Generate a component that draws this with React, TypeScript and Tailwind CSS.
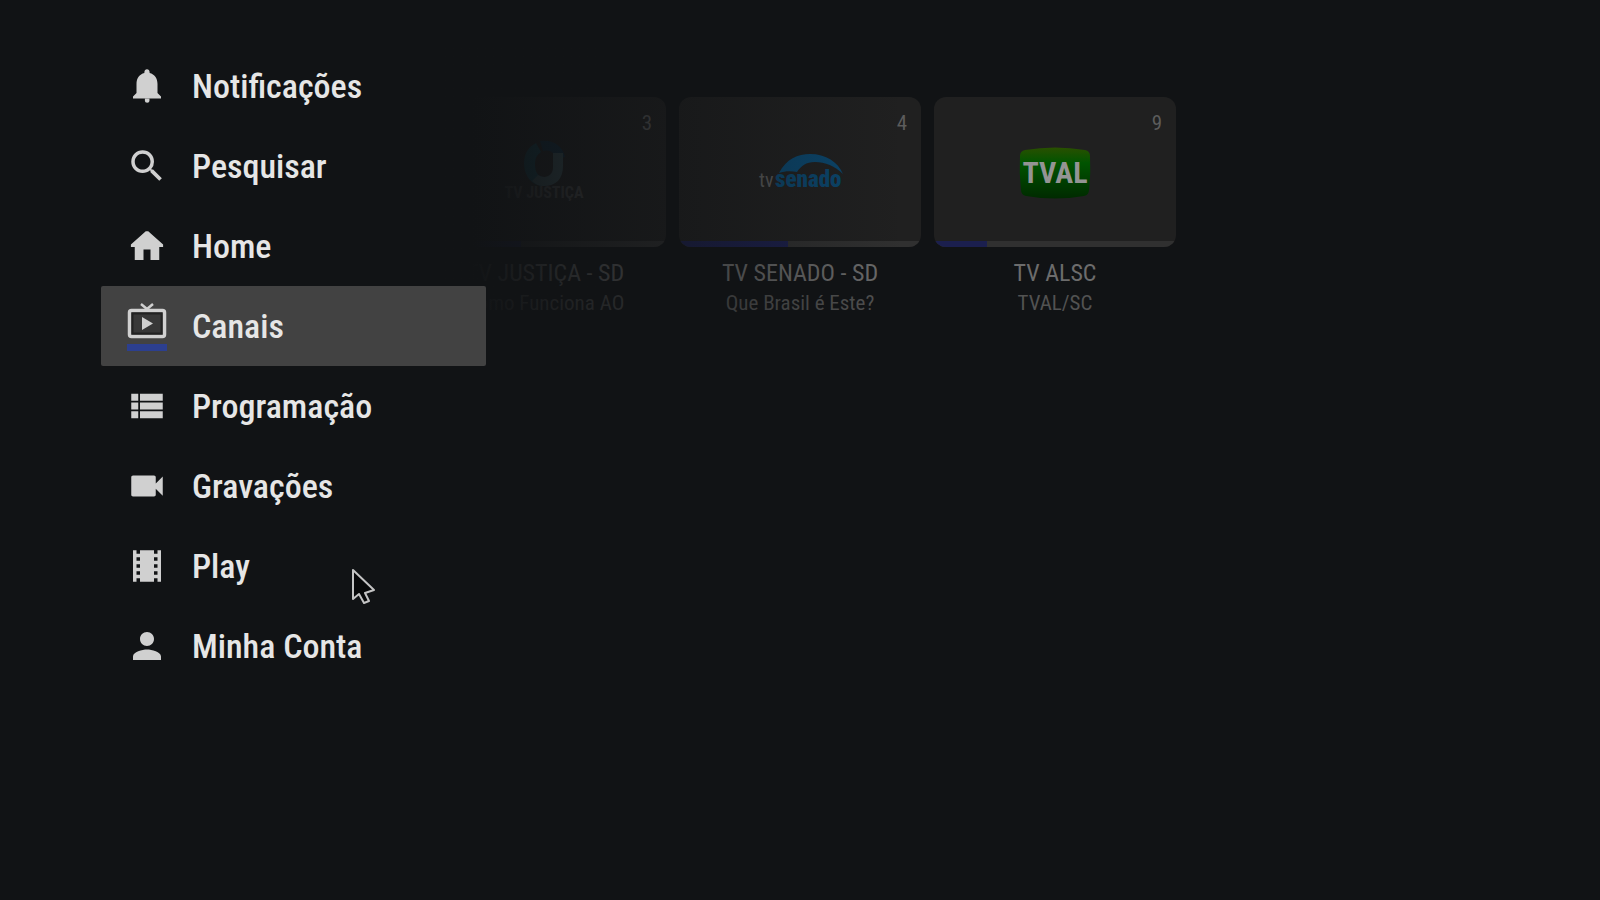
import React from "react";
import type { IconType } from "react-icons";
import {
  MdPerson,
  MdSearch,
  MdTheaters,
  MdVideocam,
  MdViewList,
} from "react-icons/md";

type IconProps = { className?: string };

function BellIcon({ className }: IconProps) {
  return (
    <svg viewBox="0 0 24 24" fill="currentColor" className={className} aria-hidden="true">
      <path d="M10.8 19h2.6v1.6q0 1-1.3 1t-1.3-1zM18 16v-5.2c0-3.4-1.7-5.6-4.5-6.3v-.4C13.500 3 12.800 2.400 12 2.400s-1.500.6-1.500 1.700v.4C7.700 5.200 6 7.400 6 10.800V16l-2 2v1.200h16V18z" />
    </svg>
  );
}

function HomeIcon({ className }: IconProps) {
  return (
    <svg viewBox="0 0 24 24" fill="currentColor" className={className} aria-hidden="true">
      <path d="M10 20v-6h4v6h5v-7.500h2.200v-1.400L12.700 3.600h-1.400L2.800 11.100v1.400H5V20z" />
    </svg>
  );
}

function TvIcon({ className }: IconProps) {
  return (
    <svg viewBox="0 0 42 42" className={className} aria-hidden="true">
      <path d="M15 2l6 5 6-5" fill="none" stroke="currentColor" strokeWidth="2.500" />
      <rect x="3.500" y="8.500" width="35" height="26" rx="2" fill="#383838" stroke="currentColor" strokeWidth="3.500" />
      <rect x="6.500" y="11.500" width="29" height="20" fill="none" stroke="#222" strokeWidth="2" />
      <path d="M16 15v13l11-6.500z" fill="currentColor" />
    </svg>
  );
}

type NavItem = {
  label: string;
  icon: IconType | typeof HomeIcon;
  active?: boolean;
};

const navItems: NavItem[] = [
  { label: "Notificações", icon: BellIcon },
  { label: "Pesquisar", icon: MdSearch },
  { label: "Home", icon: HomeIcon },
  { label: "Canais", icon: TvIcon, active: true },
  { label: "Programação", icon: MdViewList },
  { label: "Gravações", icon: MdVideocam },
  { label: "Play", icon: MdTheaters },
  { label: "Minha Conta", icon: MdPerson },
];

function JusticaLogo() {
  return (
    <svg viewBox="0 0 90 58" className="h-[58px] w-[90px] overflow-visible" aria-hidden="true">
      <path d="M36-2C28 2 24 9 24 18c0 13 8 23 20 23v-9c-6 0-9-5-9-13 0-6 2-9 6-12z" fill="#0c4a5a" />
      <path d="M40-4c14-2 23 6 25 16l-9 2c-1-6-6-10-13-8z" fill="#0a2e46" />
      <path d="M53 8h10v13c0 13-7 20-19 20-5 0-9-2-12-5l6-6c6 4 15 2 15-8z" fill="#3f5c62" />
      <text x="44" y="53" textAnchor="middle" fontSize="16" fontWeight="700" fill="#4c4c4c">
        TV JUSTIÇA
      </text>
    </svg>
  );
}

function SenadoLogo() {
  return (
    <svg viewBox="0 0 90 58" className="h-[58px] w-[90px] overflow-visible" aria-hidden="true">
      <path d="M24 28C31 14 43 9 55 9c16 0 28 8 33 20-8-8-18-12-28-12-9 0-14 4-18 10-6-1-12-1-18 1z" fill="#0a4870" />
      <text x="4" y="42" fontSize="20" fill="#5c5c5c">
        tv
      </text>
      <text x="20" y="42" fontSize="23" fontWeight="900" fill="#0a4870">
        senado
      </text>
    </svg>
  );
}

function TvalLogo() {
  return (
    <svg viewBox="0 0 90 58" className="h-[58px] w-[90px]" aria-hidden="true">
      <defs>
        <linearGradient id="tval" x1="0" y1="0" x2="0" y2="1">
          <stop offset="0" stopColor="#2a5000" />
          <stop offset="0.3" stopColor="#005400" />
          <stop offset="1" stopColor="#002a00" />
        </linearGradient>
      </defs>
      <path d="M15 5q30-5 60 0 5 1 5 6 1 17-1 34 0 5-5 6-29 5-58 0-5-1-5-6-2-17-1-34 0-5 5-6z" fill="url(#tval)" />
      <text x="45" y="38" textAnchor="middle" fontSize="30" fontWeight="700" fill="#949494">
        TVAL
      </text>
    </svg>
  );
}

const channels = [
  { number: 3, name: "TV JUSTIÇA - SD", program: "Como Funciona AO", progress: 40, logo: JusticaLogo },
  { number: 4, name: "TV SENADO - SD", program: "Que Brasil é Este?", progress: 45, logo: SenadoLogo },
  { number: 9, name: "TV ALSC", program: "TVAL/SC", progress: 22, logo: TvalLogo },
];

function SideNav() {
  return (
    <nav className="relative z-10 w-[385px] shrink-0" aria-label="Menu">
      <ul>
        {navItems.map(({ label, icon: Icon, active }) => (
          <li key={label}>
            <a
              href="#"
              aria-current={active ? "page" : undefined}
              className={`flex h-20 items-center gap-6 rounded-xs pl-[25px] text-[34px] leading-10 font-medium text-[#e6e6e6] ${
                active ? "bg-[#424242]" : ""
              }`}
            >
              <span className="flex w-[42px] flex-col items-center">
                <Icon className="size-[42px] text-[#d0d0d0]" />
                {active && <span className="h-[7px] w-10 bg-[#2c3f8f]" />}
              </span>
              {label}
            </a>
          </li>
        ))}
      </ul>
    </nav>
  );
}

function ChannelRow() {
  return (
    <section className="relative -ml-[62px] flex gap-[13px] pt-[51px]" aria-label="Canais">
      {channels.map(({ number, name, program, progress, logo: Logo }) => (
        <article key={number} className="w-[242px] text-center">
          <div className="relative flex h-[150px] items-center justify-center overflow-hidden rounded-xl bg-[#202020] pt-1">
            <Logo />
            <span className="absolute top-3 right-3.5 text-[21px] leading-7 text-[#5c5c5c]">{number}</span>
            <div className="absolute inset-x-0 bottom-0 h-[6px] bg-[#303030]">
              <div className="h-full bg-[#1b1f4e]" style={{ width: `${progress}%` }} />
            </div>
          </div>
          <h2 className="mt-2.5 text-[24px] leading-8 text-[#6c6c6c]">{name}</h2>
          <p className="text-[21px] leading-7 text-[#525252]">{program}</p>
        </article>
      ))}
      {/* menu scrim */}
      <div className="pointer-events-none absolute inset-y-0 left-0 w-[480px] bg-linear-to-r from-[#111315] from-10% to-transparent" />
    </section>
  );
}

export default function App() {
  return (
    <main
      className="relative min-h-screen overflow-hidden bg-[#111315] pt-[46px] pl-[101px]"
      style={{ fontFamily: '"Roboto Condensed", Roboto, sans-serif' }}
    >
      <div className="flex items-start">
        <SideNav />
        <ChannelRow />
      </div>
      <svg viewBox="0 0 28 40" className="absolute top-[567px] left-[350px] h-10 w-7" aria-hidden="true">
        <path
          d="M3 3v29l6-5 5 9 5-2-4-8 9-3z"
          fill="#08090a"
          stroke="#c4c4c4"
          strokeWidth="2"
          strokeLinejoin="round"
        />
      </svg>
    </main>
  );
}
